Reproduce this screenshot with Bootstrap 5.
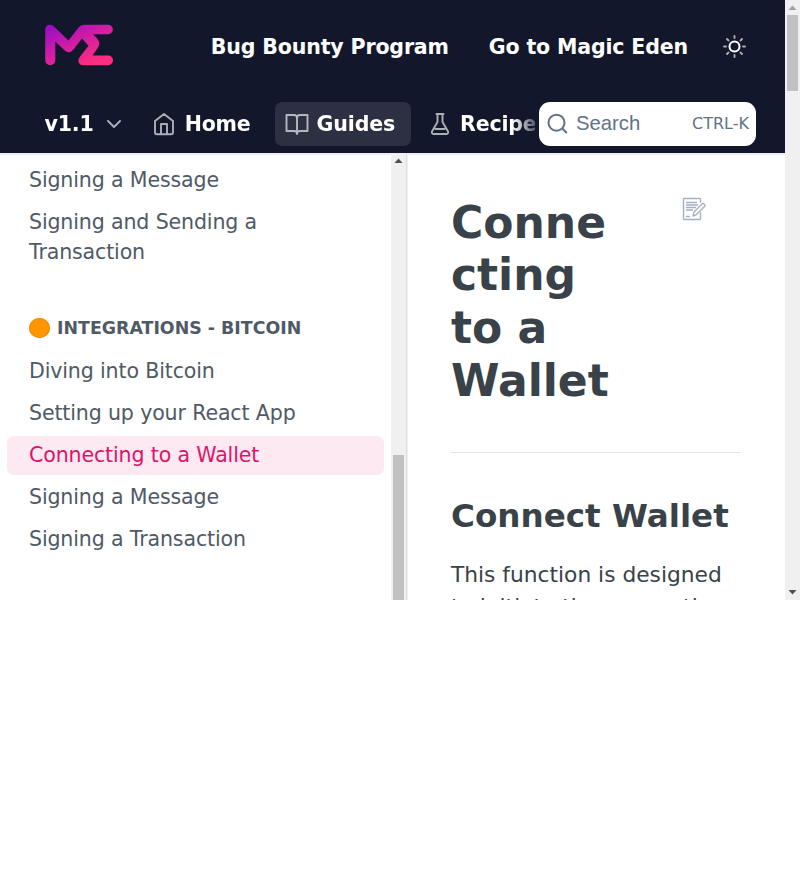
<!DOCTYPE html>
<html lang="en">
<head>
<meta charset="utf-8">
<meta name="viewport" content="width=device-width, initial-scale=1">
<title>Connecting to a Wallet</title>
<link href="https://cdn.jsdelivr.net/npm/bootstrap@5.3.0/dist/css/bootstrap.min.css" rel="stylesheet">
<style>
body{font-family:"DejaVu Sans",sans-serif;background:#fff;color:#384248;overflow:hidden}
.viewport-box{height:600px}
.site-header{height:153px;background:#13172c;color:#fff;font-size:20.55px;letter-spacing:-.17px;font-weight:700;line-height:30px}
.site-header a{color:#fff;text-decoration:none;white-space:nowrap}
.top-row{height:93px;padding:0 38px 0 44px}
.brand-mark{margin-bottom:4px}
.top-links{gap:40px}
.sun-icon{margin-left:-5px}
.sub-row{height:60px;padding:9px 29px 0 44.500px}
.tabs-clip{width:490.500px;height:44px;flex:none;-webkit-mask-image:linear-gradient(90deg,#000 468px,transparent 499px);mask-image:linear-gradient(90deg,#000 468px,transparent 499px)}
.tab-link{height:44px;padding:0 16px 0 10px;border-radius:7px;gap:8px;flex:none;margin-left:8px}
.tab-first{margin-left:21.500px}
.tab-on{background:#2c3042}
.tab-link svg,.chev{opacity:.65;flex:none}
.chev{margin-left:12px}
.tab-first svg{margin-right:.5px}
.search-box{width:217px;height:44px;margin-left:4px;border-radius:11px;background:#fff;color:#637288;font-weight:400;letter-spacing:0;padding:0 7px 0 8px}
.search-label{font-family:"Liberation Sans",sans-serif;font-size:20.25px;margin:-2px 0 0 8px}
.search-key{font-size:16px}
.main-area{min-height:0;box-shadow:inset 0 2px 1px #eceef4}
.side-menu{width:391px;padding:8px 7px 0;color:#4f5a66;font-size:20.55px;letter-spacing:-.14px;line-height:30px}
.side-menu a{display:block;color:inherit;text-decoration:none;padding:4px 22px 5px;margin-bottom:3px;border-radius:7px}
.side-menu a.current-page{background:#fde9f1;color:#df1369}
.side-title{font-size:17.4px;letter-spacing:0;font-weight:700;line-height:26px;margin:43px 22px 11px;gap:7px}
.orange-dot{width:21px;height:20px;border-radius:50%;background:#ff9500;box-shadow:inset 0 0 0 1px #f28c0c}
.bar-track{width:15px;background:#f0f0f0;flex:none}
.bar-thumb{background:#c1c1c1;width:11px;margin:0 2px}
.side-thumb{margin-top:287px}
.page-thumb{height:76px}
.article{width:379px;border-left:1px solid #dfdfdf;box-shadow:inset 1px 0 #f1f1f1;padding:0 45px 0 44px;overflow:hidden}
.page-title{font-size:44px;font-weight:700;line-height:52.8px;width:160px;word-break:break-all;margin:43.500px 0 0}
.edit-icon{margin:44px 34px 0 0}
.rule{height:1px;background:#e3e4e5;margin:44.500px 0 40px}
.sec-title{font-size:32.6px;font-weight:700;line-height:46px;margin:0 0 20px;white-space:nowrap}
.prose{font-size:21.75px;line-height:32px;white-space:nowrap}
</style>
<script src="https://cdn.jsdelivr.net/npm/bootstrap@5.3.0/dist/js/bootstrap.bundle.min.js"></script>
</head>
<body>
<div class="viewport-box d-flex overflow-hidden">
<div class="d-flex flex-column flex-grow-1 overflow-hidden">
<header class="site-header flex-shrink-0">
<div class="top-row d-flex align-items-center justify-content-between">
<svg class="brand-mark" width="70" height="42" viewBox="0 0 70 42"><defs><linearGradient id="brand" gradientUnits="userSpaceOnUse" x1="10" y1="-3" x2="34" y2="46"><stop stop-color="#920cc6"/><stop offset=".5" stop-color="#cf1ca6"/><stop offset="1" stop-color="#ff2d80"/></linearGradient></defs><path fill="url(#brand)" d="M1.200 6Q1.200 .8 6 .8Q8.500 .8 10.500 3L24.500 16.500L34.500 3.500Q36.800 .8 40 .8H64.200A4.700 4.700 0 0 1 64.200 10.200H49L53.500 15Q57 19 54 23.500L48.500 31.500H64.200A4.850 4.850 0 0 1 64.200 41.200H39.500Q36 41.200 34.800 38.700Q33.500 36 35.700 33L44.500 21.800L38 14.500L29.500 25.500Q25 30.500 20.500 26.200L11.300 17.500V36.300A5.050 5.050 0 0 1 1.200 36.300Z"/></svg>
<div class="top-links d-flex align-items-center"><a href="#">Bug Bounty Program</a><a href="#">Go to Magic Eden</a>
<svg class="sun-icon" width="24" height="24" viewBox="0 0 24 24" fill="none" stroke="#fff" stroke-linecap="round"><circle cx="11.500" cy="11.500" r="5" stroke-width="2"/><path d="M11.500 1v2M11.500 20v2M1 11.500h2M20 11.500h2M4 4l1.500 1.500M17.500 17.500l1.500 1.500M4 19l1.500-1.500M17.500 5.500l1.500-1.500" stroke-width="1.900" opacity=".65"/></svg></div>
</div>
<div class="sub-row d-flex">
<div class="tabs-clip d-flex align-items-center overflow-hidden">
<a href="#" class="d-flex align-items-center flex-shrink-0">v1.1<svg class="chev" width="16" height="16" viewBox="0 0 16 16" fill="none" stroke="#fff" stroke-width="1.900" stroke-linecap="round" stroke-linejoin="round"><path d="M2 5l6 6 6-6"/></svg></a>
<a href="#" class="tab-link tab-first d-flex align-items-center"><svg width="23" height="24" viewBox="0 0 23 24" fill="none" stroke="#fff" stroke-width="1.900" stroke-linejoin="round"><path d="M2 9L11 2l9 7v11.200a2 2 0 0 1-2 2H4a2 2 0 0 1-2-2zM8 22V12h6V22"/></svg>Home</a>
<a href="#" class="tab-link tab-on d-flex align-items-center"><svg width="24" height="24" viewBox="0 0 24 24" fill="none" stroke="#fff" stroke-width="1.900" stroke-linejoin="round"><path d="M12 6q0-3-3-3H1.500v16H9q3 0 3 3zM12 6q0-3 3-3h7.500v16H15q-3 0-3 3z"/></svg>Guides</a>
<a href="#" class="tab-link d-flex align-items-center"><svg width="23" height="24" viewBox="0 0 23 24" fill="none" stroke="#fff" stroke-width="1.900" stroke-linejoin="round" stroke-linecap="round"><path d="M7.500 2h7M8.500 2v8L3 19.500Q2.300 22 4.500 22h13q2.200 0 1.500-2.500L13.500 10V2M6.500 17h9"/></svg>Recipes</a>
</div>
<div class="search-box d-flex align-items-center"><svg width="21" height="22" viewBox="0 0 21 22" fill="none" stroke="#637288" stroke-width="2" stroke-linecap="round"><circle cx="9.500" cy="9.700" r="8"/><path d="M15.300 15.500l4 4"/></svg><span class="search-label">Search</span><span class="search-key ms-auto">CTRL-K</span></div>
</div>
</header>
<div class="main-area d-flex flex-grow-1">
<nav class="side-menu flex-shrink-0">
<a href="#">Signing a Message</a>
<a href="#">Signing and Sending a Transaction</a>
<div class="side-title d-flex align-items-center"><span class="orange-dot"></span>INTEGRATIONS - BITCOIN</div>
<a href="#">Diving into Bitcoin</a>
<a href="#">Setting up your React App</a>
<a href="#" class="current-page">Connecting to a Wallet</a>
<a href="#">Signing a Message</a>
<a href="#">Signing a Transaction</a>
</nav>
<div class="bar-track d-flex flex-column"><svg width="15" height="15" viewBox="0 0 15 15"><path d="M3.500 10h8L7.500 5.500z" fill="#505050"/></svg><div class="bar-thumb side-thumb flex-grow-1"></div></div>
<main class="article">
<div class="d-flex justify-content-between"><h1 class="page-title">Connecting to a Wallet</h1>
<svg class="edit-icon" width="24" height="24" viewBox="0 0 24 24" fill="none" stroke="#a5afc2" stroke-width="1.400" stroke-linejoin="round" stroke-linecap="round"><path d="M18.500 5V2.200q0-.7-.7-.7H2.200q-.7 0-.7.7v19.600q0 .7.7.7h15.600q.7 0 .7-.7V16M4.500 5.500h10M4.500 8h11M4.500 10.500h9M4.500 13h6M4.500 19.500h3M11 19l1-4 8-8q1-1 2.300.2t.2 2.400l-8 8z"/></svg></div>
<div class="rule"></div>
<h2 class="sec-title">Connect Wallet</h2>
<div class="prose">This function is designed<br>to initiate the connection</div>
</main>
</div>
</div>
<div class="bar-track d-flex flex-column"><svg width="15" height="15" viewBox="0 0 15 15"><path d="M3.500 10h8L7.500 5.500z" fill="#a3a3a3"/></svg><div class="bar-thumb page-thumb"></div><svg class="mt-auto" width="15" height="15" viewBox="0 0 15 15"><path d="M3.500 5h8L7.500 9.500z" fill="#505050"/></svg></div>
</div>
</body>
</html>
